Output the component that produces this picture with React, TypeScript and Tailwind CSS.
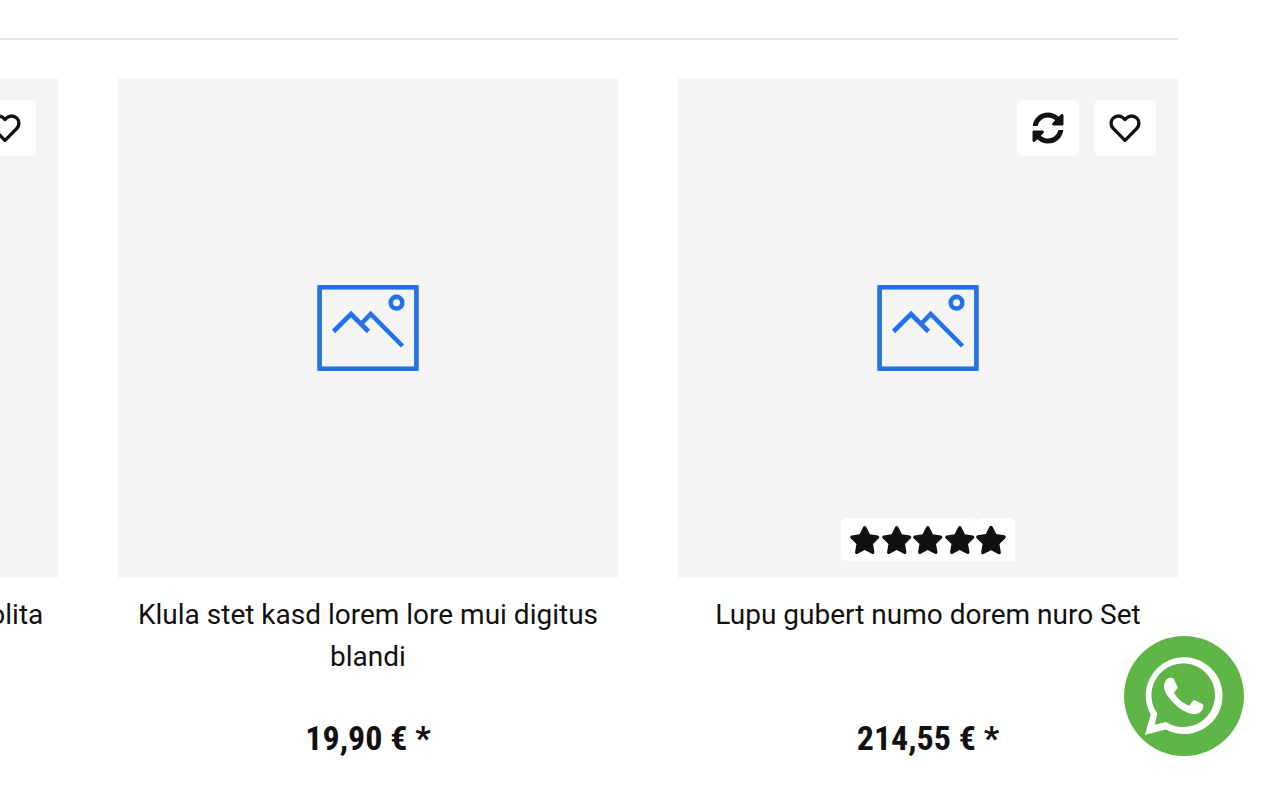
import React from "react";
import { FaStar, FaSyncAlt } from "react-icons/fa";
import { FiHeart } from "react-icons/fi";

type Product = {
  name: string;
  price: string;
  actions?: boolean;
  rated?: boolean;
};

const products: Product[] = [
  { name: "Stet kasd lorem numo digitus et solita", price: "49,90 € *", actions: true },
  { name: "Klula stet kasd lorem lore mui digitus blandi", price: "19,90 € *" },
  { name: "Lupu gubert numo dorem nuro Set", price: "214,55 € *", actions: true, rated: true },
];

function Placeholder() {
  return (
    <svg viewBox="0 0 102 86" className="h-[86px] w-[102px]" fill="none" stroke="#2472ea" strokeWidth="4.6" aria-hidden="true">
      <rect x="2.6" y="2.3" width="96.8" height="81.4" />
      <path d="M16.5 46.5 34 29 51.5 46.5" />
      <path d="M45.5 37.5 53.7 29 85.5 61" />
      <circle cx="79.5" cy="17.7" r="5.8" />
    </svg>
  );
}

function WhatsAppLogo() {
  return (
    <svg viewBox="0 0 120 120" className="size-full" fill="currentColor" aria-hidden="true">
      <path
        fillRule="evenodd"
        d="M21 98.7 26.7 78.5A38.4 38.4 0 1 1 42 93.5ZM30.7 88.7 42 86A31.8 31.8 0 1 0 33.3 77.7Z"
      />
      <path d="M42 44.3C43.3 42.3 45 41.7 46.8 41.7C48.6 41.7 49.3 41.8 50 43.5L53.5 51C54.2 52.8 50.2 55.4 50.2 56.6C50.2 58.2 53.7 62.2 56.3 64.4C59 66.7 63.7 69.4 65.2 69.4C66.6 69.4 68.3 64.2 70 64L78 67.8C79.4 68.5 79.5 69.6 79 72C78.2 75.6 74.5 77.8 70.5 78.1C66.5 78.2 58.5 75.2 52.5 69.7C46.5 64.4 40 56.5 40 50.6C40 47.7 41 45.7 42 44.3Z" />
    </svg>
  );
}

function Rating() {
  return (
    <div role="img" aria-label="5 out of 5 stars" className="absolute bottom-[17px] flex h-[43px]">
      <div className="flex w-[134px] items-center justify-between rounded-l-md bg-white pl-2">
        {[1, 2, 3, 4].map((n) => (
          <FaStar key={n} size={32} />
        ))}
      </div>
      <div className="flex w-10 items-center rounded-t-md bg-white">
        <FaStar size={32} />
      </div>
    </div>
  );
}

function ProductCard({ name, price, actions, rated }: Product) {
  return (
    <article className="w-[500px] shrink-0 text-center">
      <div className="relative flex aspect-square items-center justify-center bg-[#f5f5f5]">
        <Placeholder />
        {actions && (
          <div className="absolute top-[22px] right-[22px] flex gap-[15px]">
            <button aria-label="Compare" className="flex h-14 w-[62px] items-center justify-center rounded-md bg-white">
              <FaSyncAlt size={32} />
            </button>
            <button aria-label="Add to wishlist" className="flex h-14 w-[62px] items-center justify-center rounded-md bg-white">
              <FiHeart size={32} strokeWidth={2.5} />
            </button>
          </div>
        )}
        {rated && <Rating />}
      </div>
      <h3 className="mt-4 min-h-[84px] text-[28px] leading-[42px]">
        <a href="#product">{name}</a>
      </h3>
      <p className="mt-10 font-['Roboto_Condensed','Roboto',sans-serif] text-[34px] leading-10 font-bold">{price}</p>
    </article>
  );
}

export default function App() {
  return (
    <main className="min-h-screen overflow-hidden bg-white pt-[38px] pr-[98px] font-['Roboto',sans-serif] text-[#111111]">
      <hr className="border-t-2 border-[#e2e2e2]" />
      <section aria-label="Products" className="mt-[38px] flex justify-end gap-[60px]">
        {products.map((product) => (
          <ProductCard key={product.name} {...product} />
        ))}
      </section>
      <a
        href="#whatsapp"
        aria-label="WhatsApp"
        className="fixed right-8 bottom-8 size-[120px] rounded-full bg-[#60b548] text-white"
      >
        <WhatsAppLogo />
      </a>
    </main>
  );
}
